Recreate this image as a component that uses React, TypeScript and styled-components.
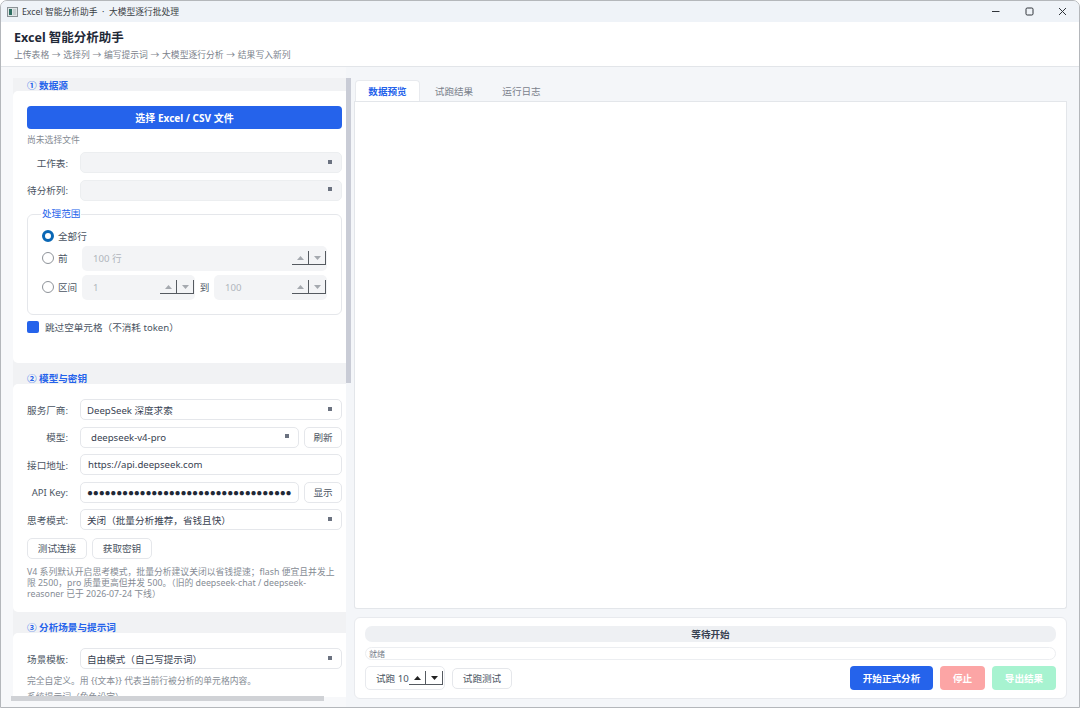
import styled, { createGlobalStyle } from "styled-components";

const GlobalStyle = createGlobalStyle`
  html, body {
    margin: 0;
    padding: 0;
    background: #fff;
    overflow: hidden;
  }
  * {
    box-sizing: border-box;
  }
`;

const Win = styled.div`
  width: 1080px;
  height: 708px;
  display: flex;
  flex-direction: column;
  border: 1px solid #b4b7bb;
  border-radius: 7px 7px 0 0;
  background: #f4f6f9;
  overflow: hidden;
  position: relative;
  font-family: "Noto Sans", "Noto Sans CJK SC", sans-serif;
  font-size: 9.6px;
  color: #374151;
`;

const TitleBar = styled.div`
  height: 21px;
  flex: none;
  display: flex;
  align-items: center;
  padding-left: 6px;
  background: #eff3f8;
  font-size: 8.75px;
  color: #3a3f45;
`;

const TitleText = styled.span`
  margin-left: 4px;
  white-space: pre;
`;

const WinControls = styled.div`
  margin-left: auto;
  display: flex;
  align-items: center;
  padding-right: 12px;
  gap: 24.5px;
`;

const Header = styled.div`
  height: 45px;
  flex: none;
  padding: 7px 13px 0;
  background: #fff;
  border-bottom: 1px solid #e2e5e9;
`;

const AppName = styled.div`
  font-size: 12.5px;
  line-height: 17px;
  font-weight: 700;
  color: #1f2937;
`;

const SubName = styled.div`
  margin-top: 3px;
  font-size: 8.8px;
  line-height: 12px;
  word-spacing: 0.4px;
  color: #7b828c;
  white-space: pre;
`;

const Body = styled.div`
  flex: 1;
  min-height: 0;
  display: flex;
`;

const LeftColumn = styled.div`
  width: 345px;
  flex: none;
  background: #f7f8fa;
  padding: 11px 0 10px 12px;
  display: flex;
`;

const LeftPane = styled.div`
  flex: 1;
  min-width: 0;
  overflow: hidden;
`;

const Section = styled.section<{ $first?: boolean }>`
  width: 343px;
  background: #f1f2f4;
  padding-top: ${(p) => (p.$first ? 2 : 10)}px;
`;

const SectionTitle = styled.div`
  height: 11px;
  line-height: 11px;
  padding-left: 14px;
  font-size: 9.6px;
  font-weight: 700;
  color: #2563eb;
`;

const Card = styled.div<{ $height: number }>`
  height: ${(p) => p.$height}px;
  padding: 15px 14px 0;
  background: #fff;
  border-radius: 5px;
  display: flex;
  flex-direction: column;
`;

const PrimaryWide = styled.div`
  height: 23px;
  flex: none;
  display: flex;
  align-items: center;
  justify-content: center;
  background: #2563eb;
  border-radius: 4px;
  color: #fff;
  font-weight: 700;
  font-size: 10px;
`;

const Hint = styled.div<{ $top?: number }>`
  margin-top: ${(p) => p.$top ?? 6}px;
  font-size: 8.8px;
  line-height: 11px;
  color: #858b94;
  white-space: nowrap;
`;

const FormRow = styled.div<{ $top?: number }>`
  margin-top: ${(p) => p.$top ?? 6.5}px;
  display: flex;
  align-items: center;
  flex: none;
`;

const FieldLabel = styled.div`
  width: 41px;
  flex: none;
  margin-right: 12px;
  text-align: right;
  white-space: nowrap;
  font-size: 9.6px;
  color: #4b5563;
`;

const Field = styled.div<{ $disabled?: boolean; $inset?: number }>`
  flex: 1;
  min-width: 0;
  height: 21px;
  display: flex;
  align-items: center;
  padding: 0 9px 0 ${(p) => p.$inset ?? 6}px;
  border: 1px solid ${(p) => (p.$disabled ? "#eceef0" : "#e5e7eb")};
  border-radius: 5px;
  background: ${(p) => (p.$disabled ? "#f3f4f6" : "#fff")};
  color: #374151;
  font-size: 9.6px;
  white-space: nowrap;
  overflow: hidden;
`;

const ArrowDot = styled.i`
  width: 4px;
  height: 4px;
  margin: -2px 0 0 auto;
  background: #6b7280;
`;

const SmallBtn = styled.div<{ $width: number; $left?: number }>`
  width: ${(p) => p.$width}px;
  height: 21px;
  margin-left: ${(p) => p.$left ?? 0}px;
  flex: none;
  display: flex;
  align-items: center;
  justify-content: center;
  border: 1px solid #e5e7eb;
  border-radius: 5px;
  background: #fff;
  color: #4b5563;
  font-size: 9.6px;
`;

const BtnGroup = styled.div`
  margin-top: 7.5px;
  display: flex;
  gap: 5px;
`;

const RangeBox = styled.fieldset`
  position: relative;
  margin: 13.5px 0 0;
  padding: 11px 14px 0;
  height: 101px;
  flex: none;
  border: 1px solid #e5e7eb;
  border-radius: 6px;
`;

const RangeLegend = styled.div`
  position: absolute;
  top: -7px;
  left: 13px;
  padding: 0 1px;
  background: #fff;
  font-size: 9.6px;
  line-height: 12px;
  color: #2563eb;
`;

const RadioRow = styled.div<{ $height: number; $top?: number }>`
  height: ${(p) => p.$height}px;
  margin-top: ${(p) => p.$top ?? 0}px;
  display: flex;
  align-items: center;
  font-size: 9.6px;
  color: #4b5563;
`;

const Radio = styled.i<{ $on?: boolean }>`
  width: 12px;
  height: 12px;
  flex: none;
  margin-right: 4px;
  border-radius: 50%;
  background: #fff;
  border: ${(p) => (p.$on ? "3px solid #0a67b5" : "1px solid #8e9399")};
`;

const RadioLabel = styled.span`
  width: 24px;
  flex: none;
`;

const Spin = styled.div<{ $flex?: boolean }>`
  flex: ${(p) => (p.$flex ? "1" : "none")};
  width: ${(p) => (p.$flex ? "auto" : "113px")};
  height: 24.5px;
  display: flex;
  align-items: center;
  padding: 0 1px 0 11px;
  border-radius: 5px;
  background: #f3f4f6;
  color: #b0b5bc;
  font-size: 9.6px;
`;

const SpinBtns = styled.div`
  margin-left: auto;
  flex: none;
  display: flex;
`;

const SpinBtn = styled.div<{ $dark?: boolean }>`
  width: 17px;
  height: 14px;
  display: flex;
  align-items: center;
  justify-content: center;
  border-right: 1px solid #555a60;
  border-bottom: 1px solid #555a60;
  color: ${(p) => (p.$dark ? "#222" : "#a5a9af")};
`;

const ToLabel = styled.span`
  width: 19px;
  flex: none;
  text-align: center;
  font-size: 9.6px;
`;

const CheckRow = styled.div`
  margin-top: 5px;
  display: flex;
  align-items: center;
  font-size: 9.6px;
  color: #4b5563;
`;

const CheckMark = styled.i`
  width: 12px;
  height: 12px;
  margin-right: 6px;
  border-radius: 2px;
  background: #2563eb;
`;

const Note = styled.div`
  margin-top: 8px;
  width: 312px;
  font-size: 8.8px;
  line-height: 11px;
  color: #858b94;
  word-break: break-word;
`;

const Dots = styled.span`
  font-family: "Liberation Sans", sans-serif;
  font-size: 10px;
  letter-spacing: -0.2px;
  color: #1f2937;
`;

const RightPane = styled.div`
  flex: 1;
  min-width: 0;
  padding: 13px 12px 8px 8px;
  display: flex;
  flex-direction: column;
`;

const TabBar = styled.div`
  height: 22px;
  flex: none;
  display: flex;
  align-items: stretch;
  padding-left: 1px;
  border-bottom: 1px solid #e3e6ea;
`;

const Tab = styled.div<{ $active?: boolean; $width: number }>`
  width: ${(p) => p.$width}px;
  display: flex;
  align-items: center;
  justify-content: center;
  border-radius: 4px 4px 0 0;
  font-size: 9.6px;
  background: ${(p) => (p.$active ? "#fff" : "transparent")};
  color: ${(p) => (p.$active ? "#2563eb" : "#7b828c")};
  font-weight: ${(p) => (p.$active ? 700 : 400)};
  border: ${(p) => (p.$active ? "1px solid #e8eaee" : "none")};
  border-bottom: none;
`;

const PreviewPane = styled.div`
  flex: 1;
  min-height: 0;
  background: #fff;
  border: 1px solid #e3e6ea;
  border-top: none;
  border-radius: 0 0 3px 3px;
`;

const BottomCard = styled.div`
  height: 82px;
  flex: none;
  margin-top: 8px;
  padding: 8px 10px 0;
  background: #fff;
  border: 1px solid #e8eaee;
  border-radius: 6px;
`;

const StatusBar = styled.div`
  height: 16px;
  display: flex;
  align-items: center;
  justify-content: center;
  background: #eef0f3;
  border-radius: 7px;
  font-size: 9.6px;
  font-weight: 700;
  color: #374151;
`;

const ProgressTrack = styled.div`
  height: 13px;
  margin-top: 5px;
  padding-left: 3px;
  display: flex;
  align-items: center;
  border: 1px solid #eceef1;
  border-radius: 7px;
  font-size: 8px;
  color: #7b828c;
`;

const ActionRow = styled.div`
  margin-top: 6px;
  display: flex;
  align-items: center;
`;

const TrialSpin = styled.div`
  width: 80px;
  height: 24px;
  flex: none;
  display: flex;
  align-items: center;
  padding: 0 1px 0 10px;
  border: 1px solid #e8eaee;
  border-radius: 5px;
  font-size: 9.6px;
  color: #4b5563;
  white-space: nowrap;
`;

const TrialLabel = styled.span`
  width: 33px;
  flex: none;
`;

const ActionBtn = styled.div<{ $bg: string; $width: number }>`
  width: ${(p) => p.$width}px;
  height: 24px;
  margin-left: 7px;
  display: flex;
  align-items: center;
  justify-content: center;
  border-radius: 4px;
  background: ${(p) => p.$bg};
  color: #fff;
  font-weight: 700;
  font-size: 9.6px;
`;

const Push = styled.div`
  flex: 1;
`;

const VScroll = styled.div`
  position: absolute;
  left: 345px;
  top: 77px;
  width: 5px;
  height: 305px;
  background: #c9ccd6;
`;

const HScroll = styled.div`
  position: absolute;
  left: 10px;
  top: 695px;
  width: 313px;
  height: 5px;
  background: #d0d2d6;
`;

const Triangle = ({ up }: { up?: boolean }) => (
  <svg width="7" height="4" viewBox="0 0 7 4">
    <path d={up ? "M3.5 0 7 4H0z" : "M0 0h7L3.5 4z"} fill="currentColor" />
  </svg>
);

const Steppers = ({ dark }: { dark?: boolean }) => (
  <SpinBtns>
    <SpinBtn $dark={dark}>
      <Triangle up />
    </SpinBtn>
    <SpinBtn $dark={dark}>
      <Triangle />
    </SpinBtn>
  </SpinBtns>
);

const AppIcon = () => (
  <svg width="11" height="10" viewBox="0 0 11 10">
    <rect x="0.5" y="0.5" width="10" height="9" fill="#dfe5e6" stroke="#8b9296" />
    <rect x="2" y="2" width="3" height="6" fill="#2f6f62" />
    <rect x="6" y="2" width="3" height="6" fill="#c6ced0" />
  </svg>
);

const MinIcon = () => (
  <svg width="9" height="9" viewBox="0 0 9 9">
    <path d="M1 4.5h7.5" stroke="#30343a" strokeWidth="1" />
  </svg>
);

const MaxIcon = () => (
  <svg width="9" height="9" viewBox="0 0 9 9">
    <rect x="1" y="1" width="7" height="7" rx="1.2" fill="none" stroke="#30343a" strokeWidth="1" />
  </svg>
);

const CloseIcon = () => (
  <svg width="9" height="9" viewBox="0 0 9 9">
    <path d="M1 1l7 7M8 1 1 8" stroke="#30343a" strokeWidth="1" />
  </svg>
);

export default function App() {
  return (
    <>
      <GlobalStyle />
      <Win>
        <TitleBar>
          <AppIcon />
          <TitleText>Excel 智能分析助手  ·  大模型逐行批处理</TitleText>
          <WinControls>
            <MinIcon />
            <MaxIcon />
            <CloseIcon />
          </WinControls>
        </TitleBar>
        <Header>
          <AppName>Excel 智能分析助手</AppName>
          <SubName>上传表格 → 选择列 → 编写提示词 → 大模型逐行分析 → 结果写入新列</SubName>
        </Header>
        <Body>
          <LeftColumn>
            <LeftPane>
              <Section $first>
                <SectionTitle>① 数据源</SectionTitle>
                <Card $height={272}>
                  <PrimaryWide>选择 Excel / CSV 文件</PrimaryWide>
                  <Hint>尚未选择文件</Hint>
                  <FormRow $top={6}>
                    <FieldLabel>工作表:</FieldLabel>
                    <Field $disabled>
                      <ArrowDot />
                    </Field>
                  </FormRow>
                  <FormRow>
                    <FieldLabel>待分析列:</FieldLabel>
                    <Field $disabled>
                      <ArrowDot />
                    </Field>
                  </FormRow>
                  <RangeBox>
                    <RangeLegend>处理范围</RangeLegend>
                    <RadioRow $height={20}>
                      <Radio $on />
                      全部行
                    </RadioRow>
                    <RadioRow $height={24.5}>
                      <Radio />
                      <RadioLabel>前</RadioLabel>
                      <Spin $flex>
                        100 行
                        <Steppers />
                      </Spin>
                    </RadioRow>
                    <RadioRow $height={24.5} $top={4.5}>
                      <Radio />
                      <RadioLabel>区间</RadioLabel>
                      <Spin>
                        1
                        <Steppers />
                      </Spin>
                      <ToLabel>到</ToLabel>
                      <Spin $flex>
                        100
                        <Steppers />
                      </Spin>
                    </RadioRow>
                  </RangeBox>
                  <CheckRow>
                    <CheckMark />
                    跳过空单元格（不消耗 token）
                  </CheckRow>
                </Card>
              </Section>
              <Section>
                <SectionTitle>② 模型与密钥</SectionTitle>
                <Card $height={228}>
                  <FormRow $top={0}>
                    <FieldLabel>服务厂商:</FieldLabel>
                    <Field>
                      DeepSeek 深度求索
                      <ArrowDot />
                    </Field>
                  </FormRow>
                  <FormRow>
                    <FieldLabel>模型:</FieldLabel>
                    <Field $inset={10}>
                      deepseek-v4-pro
                      <ArrowDot />
                    </Field>
                    <SmallBtn $width={38} $left={5}>
                      刷新
                    </SmallBtn>
                  </FormRow>
                  <FormRow>
                    <FieldLabel>接口地址:</FieldLabel>
                    <Field $inset={7}>https://api.deepseek.com</Field>
                  </FormRow>
                  <FormRow>
                    <FieldLabel>API Key:</FieldLabel>
                    <Field>
                      <Dots>●●●●●●●●●●●●●●●●●●●●●●●●●●●●●●●●●●●</Dots>
                    </Field>
                    <SmallBtn $width={38} $left={5}>
                      显示
                    </SmallBtn>
                  </FormRow>
                  <FormRow>
                    <FieldLabel>思考模式:</FieldLabel>
                    <Field>
                      关闭（批量分析推荐，省钱且快）
                      <ArrowDot />
                    </Field>
                  </FormRow>
                  <BtnGroup>
                    <SmallBtn $width={60}>测试连接</SmallBtn>
                    <SmallBtn $width={60}>获取密钥</SmallBtn>
                  </BtnGroup>
                  <Note>
                    V4 系列默认开启思考模式，批量分析建议关闭以省钱提速；flash 便宜且并发上限 2500，pro 质量更高但并发 500。（旧的 deepseek-chat / deepseek-reasoner 已于 2026-07-24 下线）
                  </Note>
                </Card>
              </Section>
              <Section>
                <SectionTitle>③ 分析场景与提示词</SectionTitle>
                <Card $height={120}>
                  <FormRow $top={0}>
                    <FieldLabel>场景模板:</FieldLabel>
                    <Field>
                      自由模式（自己写提示词）
                      <ArrowDot />
                    </Field>
                  </FormRow>
                  <Hint $top={7}>完全自定义。用 {"{{文本}}"} 代表当前行被分析的单元格内容。</Hint>
                  <Hint $top={5}>系统提示词（角色设定）</Hint>
                </Card>
              </Section>
            </LeftPane>
          </LeftColumn>
          <RightPane>
            <TabBar>
              <Tab $active $width={65}>
                数据预览
              </Tab>
              <Tab $width={68}>试跑结果</Tab>
              <Tab $width={67}>运行日志</Tab>
            </TabBar>
            <PreviewPane />
            <BottomCard>
              <StatusBar>等待开始</StatusBar>
              <ProgressTrack>就绪</ProgressTrack>
              <ActionRow>
                <TrialSpin>
                  <TrialLabel>试跑 10</TrialLabel>
                  <Steppers dark />
                </TrialSpin>
                <SmallBtn $width={60} $left={7}>
                  试跑测试
                </SmallBtn>
                <Push />
                <ActionBtn $bg="#2563eb" $width={83}>
                  开始正式分析
                </ActionBtn>
                <ActionBtn $bg="#fca5a5" $width={45}>
                  停止
                </ActionBtn>
                <ActionBtn $bg="#a7f3d0" $width={64}>
                  导出结果
                </ActionBtn>
              </ActionRow>
            </BottomCard>
          </RightPane>
        </Body>
        <VScroll />
        <HScroll />
      </Win>
    </>
  );
}
